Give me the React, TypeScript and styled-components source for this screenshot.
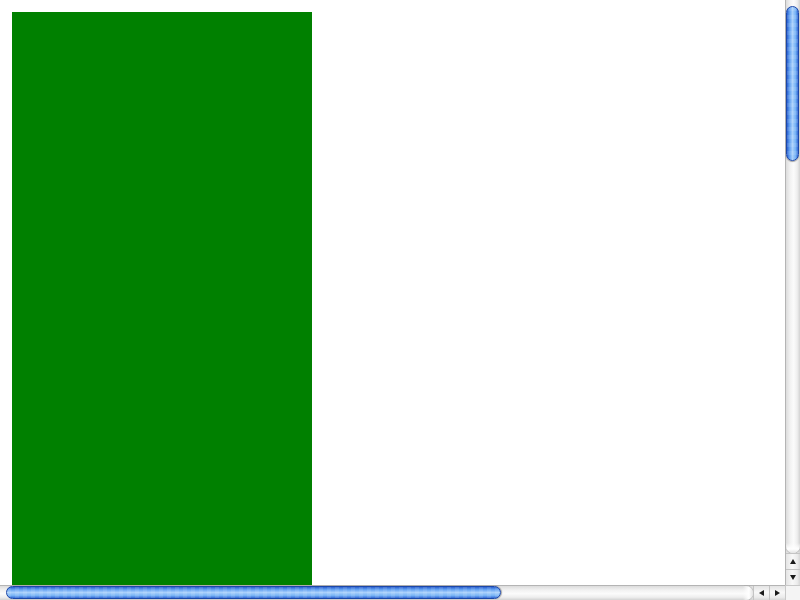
import React from "react";
import styled, { createGlobalStyle } from "styled-components";

const Global = createGlobalStyle`
  html, body { margin: 0; padding: 0; overflow: hidden; background: #fff; }
  body { font-family: "Liberation Sans", Arial, sans-serif; }
`;

const Frame = styled.div`
  width: 800px;
  height: 600px;
  display: grid;
  grid-template-columns: 785px 15px;
  grid-template-rows: 585px 15px;
  background: #fff;
`;

const Viewport = styled.div`
  overflow: hidden;
  padding: 12px 0 0 12px;
`;

const GreenBlock = styled.div`
  width: 300px;
  height: 2000px;
  background: #008000;
`;

const VBar = styled.div`
  display: flex;
  flex-direction: column;
  border-left: 1px solid #b4b4b4;
  box-sizing: border-box;
  background: linear-gradient(to right, #dcdcdc, #f2f2f2 30%, #fbfbfb 55%, #eeeeee 80%, #d2d2d2);
`;

const HBar = styled.div`
  display: flex;
  flex-direction: row;
  border-top: 1px solid #b4b4b4;
  box-sizing: border-box;
  background: linear-gradient(to bottom, #dcdcdc, #f2f2f2 30%, #fbfbfb 55%, #eeeeee 80%, #d2d2d2);
`;

const VTrack = styled.div`
  flex: 1;
  display: flex;
  flex-direction: column;
  padding: 6px 0 0 0;
`;

const HTrack = styled.div`
  flex: 1;
  display: flex;
  flex-direction: row;
  padding: 0 0 0 6px;
`;

const stripesV = `repeating-linear-gradient(to bottom, rgba(255,255,255,0.10) 0 4px, rgba(255,255,255,0) 4px 8px)`;
const stripesH = `repeating-linear-gradient(to right, rgba(255,255,255,0.10) 0 4px, rgba(255,255,255,0) 4px 8px)`;

const VThumb = styled.div<{ $len: number }>`
  height: ${(p) => p.$len}px;
  width: 13px;
  box-sizing: border-box;
  border-radius: 7px;
  border: 1px solid #1c47a8;
  background: ${stripesV},
    linear-gradient(to right, #2a5fcf, #5f9ef0 22%, #a9d0fb 50%, #76b2f5 78%, #3168d4);
  box-shadow: 0 1px 1px rgba(0, 0, 0, 0.35);
`;

const HThumb = styled.div<{ $len: number }>`
  width: ${(p) => p.$len}px;
  height: 13px;
  box-sizing: border-box;
  border-radius: 7px;
  border: 1px solid #1c47a8;
  background: ${stripesH},
    linear-gradient(to bottom, #2a5fcf, #5f9ef0 22%, #a9d0fb 50%, #76b2f5 78%, #3168d4);
  box-shadow: 1px 0 1px rgba(0, 0, 0, 0.35);
`;

const VEndCap = styled.div`
  margin-top: auto;
  height: 10px;
  border-radius: 0 0 7px 7px;
  background: linear-gradient(to bottom, rgba(255,255,255,0), #ffffff 60%, #e2e2e2);
  box-shadow: 0 1px 1px rgba(0,0,0,0.25);
`;

const HEndCap = styled.div`
  margin-left: auto;
  width: 10px;
  border-radius: 0 7px 7px 0;
  background: linear-gradient(to right, rgba(255,255,255,0), #ffffff 60%, #e2e2e2);
  box-shadow: 1px 0 1px rgba(0,0,0,0.25);
`;

const ArrowButton = styled.div<{ $horizontal?: boolean }>`
  ${(p) => (p.$horizontal ? "width: 16px; height: 100%;" : "height: 16px; width: 100%;")}
  box-sizing: border-box;
  display: flex;
  align-items: center;
  justify-content: center;
  background: ${(p) =>
    p.$horizontal
      ? "linear-gradient(to bottom, #e4e4e4, #f8f8f8 45%, #ececec 80%, #d6d6d6)"
      : "linear-gradient(to right, #e4e4e4, #f8f8f8 45%, #ececec 80%, #d6d6d6)"};
  ${(p) => (p.$horizontal ? "border-left: 1px solid #c4c4c4;" : "border-top: 1px solid #c4c4c4;")}
`;

const Triangle = styled.span<{ $dir: "up" | "down" | "left" | "right" }>`
  width: 0;
  height: 0;
  ${(p) =>
    p.$dir === "up"
      ? "border-left: 3.5px solid transparent; border-right: 3.5px solid transparent; border-bottom: 5px solid #1a1a1a;"
      : p.$dir === "down"
      ? "border-left: 3.5px solid transparent; border-right: 3.5px solid transparent; border-top: 5px solid #1a1a1a;"
      : p.$dir === "left"
      ? "border-top: 3.5px solid transparent; border-bottom: 3.5px solid transparent; border-right: 5px solid #1a1a1a;"
      : "border-top: 3.5px solid transparent; border-bottom: 3.5px solid transparent; border-left: 5px solid #1a1a1a;"}
`;

const Corner = styled.div`
  background: #f4f4f4;
  border-top: 1px solid #c8c8c8;
  border-left: 1px solid #c8c8c8;
  box-sizing: border-box;
`;

export default function App() {
  return (
    <>
      <Global />
      <Frame>
        <Viewport>
          <GreenBlock />
        </Viewport>
        <VBar>
          <VTrack>
            <VThumb $len={155} />
            <VEndCap />
          </VTrack>
          <ArrowButton>
            <Triangle $dir="up" />
          </ArrowButton>
          <ArrowButton>
            <Triangle $dir="down" />
          </ArrowButton>
        </VBar>
        <HBar>
          <HTrack>
            <HThumb $len={495} />
            <HEndCap />
          </HTrack>
          <ArrowButton $horizontal>
            <Triangle $dir="left" />
          </ArrowButton>
          <ArrowButton $horizontal>
            <Triangle $dir="right" />
          </ArrowButton>
        </HBar>
        <Corner />
      </Frame>
    </>
  );
}
